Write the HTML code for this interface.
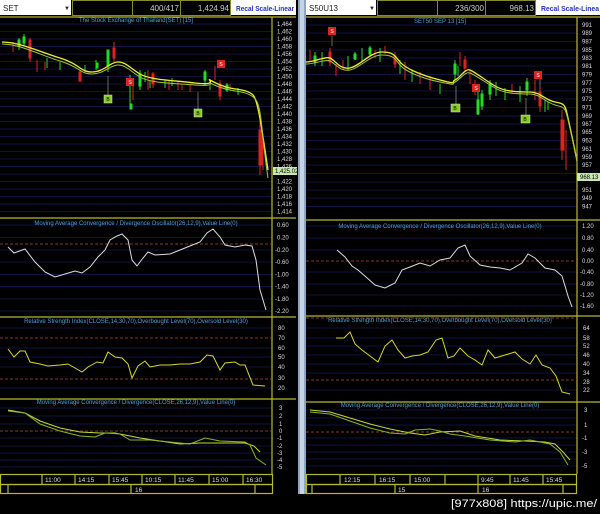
<!DOCTYPE html><html><head><meta charset="utf-8"><style>
body{margin:0;background:#000;width:600px;height:514px;overflow:hidden;font-family:"Liberation Sans",sans-serif}
svg{display:block}
text{font-family:"Liberation Sans",sans-serif}
</style></head><body>
<svg width="600" height="514" viewBox="0 0 600 514" xmlns="http://www.w3.org/2000/svg">
<rect width="600" height="514" fill="#000"/>
<rect x="0" y="0" width="71" height="15" fill="#fff"/>
<text x="3" y="11" font-size="8" fill="#222">SET</text><text x="64" y="10" font-size="6" fill="#222">▼</text>
<g fill="#000" stroke="#8a8a2a" stroke-width="1">
<rect x="72.5" y="0.5" width="60" height="15"/><rect x="132.5" y="0.5" width="48" height="15"/><rect x="180.5" y="0.5" width="50" height="15"/>
<rect x="377.5" y="0.5" width="60" height="15"/><rect x="437.5" y="0.5" width="48" height="15"/><rect x="485.5" y="0.5" width="50" height="15"/></g>
<text x="179" y="11" font-size="8" fill="#ccc" text-anchor="end">400/417</text>
<text x="229" y="11" font-size="8" fill="#ccc" text-anchor="end">1,424.94</text>
<rect x="231" y="0" width="65" height="15" fill="#fff"/>
<text x="236" y="11" font-size="7" font-weight="bold" fill="#2233bb" textLength="58" lengthAdjust="spacingAndGlyphs">Recal Scale-Linear</text>
<rect x="306" y="0" width="70" height="15" fill="#fff"/>
<text x="309" y="11" font-size="8" fill="#222">S50U13</text><text x="369" y="10" font-size="6" fill="#222">▼</text>
<text x="484" y="11" font-size="8" fill="#ccc" text-anchor="end">236/300</text>
<text x="534" y="11" font-size="8" fill="#ccc" text-anchor="end">968.13</text>
<rect x="536" y="0" width="64" height="15" fill="#fff"/>
<text x="541" y="11" font-size="7" font-weight="bold" fill="#2233bb" textLength="58" lengthAdjust="spacingAndGlyphs">Recal Scale-Linea</text>
<rect x="298" y="0" width="8" height="494" fill="#8fa6c0"/><rect x="300" y="0" width="4" height="494" fill="#c6d4e4"/>
<g stroke="#0d1240" stroke-width="1">
<path d="M0 24H272M0 31.5H272M0 39H272M0 46.5H272M0 54H272M0 61.5H272M0 69H272M0 76.5H272M0 84H272M0 91.5H272M0 99H272M0 106.5H272M0 114H272M0 121.5H272M0 129H272M0 136.5H272M0 144H272M0 151.5H272M0 159H272M0 166.5H272M0 174H272M0 181.5H272M0 189H272M0 196.5H272M0 204H272M0 211.5H272"/>
<path d="M0 225H272M0 237.5H272M0 250H272M0 262H272M0 274.5H272M0 286.5H272M0 299H272M0 311H272"/>
<path d="M0 328H272M0 348H272M0 357H272M0 367H272M0 388H272"/>
<path d="M0 408H272M0 416H272M0 424H272M0 438H272M0 446H272M0 453H272M0 460H272M0 467H272"/>
<path d="M306 25H577M306 33H577M306 41.5H577M306 50H577M306 58H577M306 66H577M306 74.5H577M306 83H577M306 91H577M306 99H577M306 107.5H577M306 116H577M306 124H577M306 132H577M306 140.5H577M306 149H577M306 157H577M306 165H577M306 173.5H577M306 182H577M306 190H577M306 198H577M306 206.5H577"/>
<path d="M306 226H577M306 238H577M306 250H577M306 272H577M306 284H577M306 295H577M306 306H577"/>
<path d="M306 328H577M306 338H577M306 346H577M306 355H577M306 364H577M306 373H577M306 390H577"/>
<path d="M306 410H577M306 418H577M306 425H577M306 438H577M306 445H577M306 452H577M306 459H577M306 466H577"/>
</g>
<g stroke="#b8b830" stroke-width="1.2" fill="none">
<path d="M0 17H296M0 218H296M0 317H296M0 399H296M272 17V474"/>
<path d="M306 17H600M306 220H600M306 316H600M306 402H600M577 17V474"/>
<rect x="0.5" y="474.5" width="272" height="10"/><rect x="0.5" y="484.5" width="272" height="9"/>
<rect x="306.5" y="474.5" width="270" height="10"/><rect x="306.5" y="484.5" width="270" height="9"/>
<path d="M42 474V484M75 474V484M109 474V484M142 474V484M175 474V484M209 474V484M243 474V484M8 484V494M131 484V494M255 484V494"/>
<path d="M340 474V484M375 474V484M410 474V484M445 474V484M478 474V484M510 474V484M543 474V484M312 484V494M395 484V494M478 484V494M563 484V494"/>
</g>
<g font-size="6" fill="#ddd">
<text x="277" y="26">1,464</text><text x="277" y="33.5">1,462</text><text x="277" y="41">1,460</text><text x="277" y="48.5">1,458</text><text x="277" y="56">1,456</text><text x="277" y="63.5">1,454</text><text x="277" y="71">1,452</text><text x="277" y="78.5">1,450</text><text x="277" y="86">1,448</text><text x="277" y="93.5">1,446</text><text x="277" y="101">1,444</text><text x="277" y="108.5">1,442</text><text x="277" y="116">1,440</text><text x="277" y="123.5">1,438</text><text x="277" y="131">1,436</text><text x="277" y="138.5">1,434</text><text x="277" y="146">1,432</text><text x="277" y="153.5">1,430</text><text x="277" y="161">1,428</text><text x="277" y="168.5">1,426</text><text x="277" y="183.5">1,422</text><text x="277" y="191">1,420</text><text x="277" y="198.5">1,418</text><text x="277" y="206">1,416</text><text x="277" y="213.5">1,414</text>
<text x="277" y="227">0.60</text><text x="277" y="239.5">0.20</text><text x="275" y="252">-0.20</text><text x="275" y="264">-0.60</text><text x="275" y="276.5">-1.00</text><text x="275" y="288.5">-1.40</text><text x="275" y="301">-1.80</text><text x="275" y="313">-2.20</text>
<text x="278" y="330">80</text><text x="278" y="340">70</text><text x="278" y="350">60</text><text x="278" y="359">50</text><text x="278" y="369">40</text><text x="278" y="380">30</text><text x="278" y="390">20</text>
<text x="279" y="410">3</text><text x="279" y="418">2</text><text x="279" y="426">1</text><text x="279" y="433">0</text><text x="277" y="440">-1</text><text x="277" y="448">-2</text><text x="277" y="455">-3</text><text x="277" y="462">-4</text><text x="277" y="469">-5</text>
<text x="582" y="27">991</text><text x="582" y="35">989</text><text x="582" y="43.5">987</text><text x="582" y="52">985</text><text x="582" y="60">983</text><text x="582" y="68">981</text><text x="582" y="76.5">979</text><text x="582" y="85">977</text><text x="582" y="93">975</text><text x="582" y="101">973</text><text x="582" y="109.5">971</text><text x="582" y="118">969</text><text x="582" y="126">967</text><text x="582" y="134">965</text><text x="582" y="142.5">963</text><text x="582" y="151">961</text><text x="582" y="159">959</text><text x="582" y="167">957</text><text x="582" y="192">951</text><text x="582" y="200">949</text><text x="582" y="208.5">947</text>
<text x="582" y="228">1.20</text><text x="582" y="240">0.80</text><text x="582" y="252">0.40</text><text x="582" y="263">0.00</text><text x="580" y="274">-0.40</text><text x="580" y="286">-0.80</text><text x="580" y="297">-1.20</text><text x="580" y="308">-1.60</text>
<text x="583" y="330">64</text><text x="583" y="340">58</text><text x="583" y="348">52</text><text x="583" y="357">46</text><text x="583" y="366">40</text><text x="583" y="375">34</text><text x="583" y="384">28</text><text x="583" y="392">22</text>
<text x="584" y="412">3</text><text x="584" y="427">1</text><text x="582" y="440">-1</text><text x="582" y="454">-3</text><text x="582" y="468">-5</text>
</g>
<g font-size="6.5" fill="#ddd">
<text x="45" y="482">11:00</text><text x="78" y="482">14:15</text><text x="112" y="482">15:45</text><text x="145" y="482">10:15</text><text x="178" y="482">11:45</text><text x="212" y="482">15:00</text><text x="246" y="482">16:30</text><text x="135" y="492">16</text>
<text x="344" y="482">12:15</text><text x="379" y="482">16:15</text><text x="414" y="482">15:00</text><text x="481" y="482">9:45</text><text x="513" y="482">11:45</text><text x="546" y="482">15:45</text><text x="398" y="492">15</text><text x="482" y="492">16</text>
</g>
<g font-size="6" fill="#4aa0d8" text-anchor="middle">
<text x="136" y="22">The Stock Exchange of Thailand(SET) [15]</text>
<text x="136" y="225">Moving Average Convergence / Divergence Oscillator(26,12,9),Value Line(0)</text>
<text x="136" y="323">Relative Strength Index(CLOSE,14,30,70),Overbought Level(70),Oversold Level(30)</text>
<text x="136" y="404">Moving Average Convergence / Divergence(CLOSE,26,12,9),Value Line(0)</text>
<text x="440" y="23">SET50 SEP 13    [15]</text>
<text x="440" y="228">Moving Average Convergence / Divergence Oscillator(26,12,9),Value Line(0)</text>
<text x="440" y="322">Relative Strength Index(CLOSE,14,30,70),Overbought Level(70),Oversold Level(30)</text>
<text x="440" y="407">Moving Average Convergence / Divergence(CLOSE,26,12,9),Value Line(0)</text>
</g>
<g stroke="#b04848" stroke-dasharray="3,2" stroke-width="0.8">
<path d="M0 244H272M0 338H272M0 379H272M0 431H272M306 261H577M306 318H577M306 380H577M306 432H577"/>
</g>
<g stroke-width="1">
<g stroke="#22dd22" fill="#22dd22">
<path d="M19 38V50M24 34V46M47 58V68M60 62V70M85 65V72M96 60V70M108 50V72M130 75V105M140 70V90M145 72V82M150 80V88M165 80V88M172 78V86M205 70V86M210 80V90M227 83V92M238 88V95"/>
<rect x="18" y="40" width="2" height="6"/><rect x="23" y="37" width="2" height="6"/><rect x="107" y="50" width="2" height="16"/><rect x="130" y="104" width="2" height="5"/><rect x="139" y="74" width="2" height="12"/><rect x="204" y="72" width="2" height="8"/><rect x="226" y="85" width="2" height="5"/><rect x="96" y="63" width="2" height="5"/>
</g>
<g stroke="#dd2222" fill="#dd2222">
<path d="M13 42V52M30 38V62M37 60V72M45 62V70M80 70V82M114 42V62M133 80V100M148 70V90M153 72V88M169 80V90M178 82V90M182 84V90M190 84V92M215 66V80M220 80V100M230 84V90M260 120V175M263 140V170"/>
<rect x="29" y="40" width="2" height="18"/><rect x="79" y="72" width="2" height="9"/><rect x="113" y="48" width="2" height="10"/><rect x="219" y="84" width="2" height="12"/><rect x="259" y="130" width="3" height="35"/><rect x="152" y="74" width="2" height="10"/>
</g>
</g>
<path d="M2 42C20 42 40 52 60 58S80 72 92 72S110 62 118 62S130 68 140 74S170 80 195 83S206 78 210 80S220 86 230 88S248 90 253 95S262 130 268 170" stroke="#eeee33" stroke-width="1.3" fill="none"/>
<path d="M2 44C20 44 40 55 60 61S80 74 92 74S110 65 118 65S130 71 140 77S170 83 195 85S206 81 210 83S220 88 230 90S250 92 256 100S262 140 268 178" stroke="#a8c838" stroke-width="1" fill="none"/>
<g font-size="5" text-anchor="middle">
<path d="M108 76V96M198 92V110" stroke="#aaa" stroke-width="0.6"/>
<rect x="104" y="95" width="8" height="8" fill="#88cc22" stroke="#ddd" stroke-width="0.5"/><text x="108" y="101" fill="#000">B</text>
<rect x="194" y="109" width="8" height="8" fill="#88cc22" stroke="#ddd" stroke-width="0.5"/><text x="198" y="115" fill="#000">B</text>
<rect x="126" y="78" width="8" height="8" fill="#dd2222"/><text x="130" y="84" fill="#fff">S</text>
<rect x="217" y="60" width="8" height="8" fill="#dd2222"/><text x="221" y="66" fill="#fff">S</text>
</g>
<rect x="273" y="167" width="24" height="8" fill="#c8e8b0"/><text x="275" y="173" font-size="6" fill="#000">1,425.02</text>
<g stroke-width="1">
<g stroke="#22dd22" fill="#22dd22">
<path d="M315 52V66M322 52V66M348 56V70M355 52V60M362 48V62M370 46V56M380 48V62M400 60V74M412 70V82M440 84V94M455 60V80M458 66V76M478 84V115M482 90V110M490 80V100M496 82V96M505 88V100M520 86V102M527 78V96M545 100V112M548 102V110"/>
<rect x="314" y="56" width="2" height="6"/><rect x="354" y="54" width="2" height="5"/><rect x="369" y="48" width="2" height="6"/><rect x="454" y="64" width="2" height="10"/><rect x="477" y="100" width="2" height="14"/><rect x="481" y="94" width="2" height="12"/><rect x="489" y="84" width="2" height="10"/><rect x="526" y="82" width="2" height="8"/>
</g>
<g stroke="#dd2222" fill="#dd2222">
<path d="M310 50V62M330 48V66M336 64V76M343 60V70M375 50V58M385 46V54M395 52V68M405 62V80M420 72V84M430 76V90M460 52V66M465 56V72M470 70V84M475 80V95M512 84V94M535 80V100M540 88V112M562 110V160M566 130V170"/>
<rect x="329" y="52" width="2" height="10"/><rect x="394" y="56" width="2" height="8"/><rect x="464" y="60" width="2" height="8"/><rect x="539" y="92" width="2" height="14"/><rect x="561" y="120" width="3" height="30"/>
</g>
</g>
<path d="M306 62C315 62 325 56 330 58S340 70 350 68S370 52 382 52S395 56 400 62S420 75 440 80S450 82 455 80S465 68 470 70S485 80 495 86S520 92 530 92S545 100 555 102S565 104 568 118S573 140 576 156" stroke="#eeee33" stroke-width="1.3" fill="none"/>
<path d="M306 64C315 64 325 59 330 61S340 72 350 70S370 55 382 55S395 59 400 65S420 78 440 82S450 84 455 82S465 71 470 73S485 82 495 88S520 94 530 94S545 102 555 105S565 106 569 124S574 146 577 162" stroke="#a8c838" stroke-width="1" fill="none"/>
<g font-size="5" text-anchor="middle">
<path d="M332 36V46M456 86V104M526 98V116M540 76V88" stroke="#aaa" stroke-width="0.6"/>
<rect x="328" y="27" width="8" height="8" fill="#dd2222"/><text x="332" y="33" fill="#fff">S</text>
<rect x="472" y="84" width="8" height="8" fill="#dd2222"/><text x="476" y="90" fill="#fff">S</text>
<rect x="534" y="71" width="8" height="8" fill="#dd2222"/><text x="538" y="77" fill="#fff">S</text>
<rect x="451" y="104" width="9" height="8" fill="#88cc22" stroke="#ddd" stroke-width="0.5"/><text x="455" y="110" fill="#000">B</text>
<rect x="521" y="115" width="9" height="8" fill="#88cc22" stroke="#ddd" stroke-width="0.5"/><text x="525" y="121" fill="#000">B</text>
</g>
<rect x="577" y="173" width="23" height="8" fill="#c8e8b0"/><text x="580" y="179" font-size="6" fill="#000">968.13</text>
<path d="M8 247L14 253L25 249L35 262L45 272L55 277L65 274L75 271L82 273L90 267L98 257L105 250L110 240L117 236L122 234L128 240L132 260L137 266L143 258L148 252L155 255L170 254L180 250L190 246L200 242L207 233L213 229L220 237L225 245L235 247L245 245L252 246L256 260L260 290L266 310" stroke="#ddd" stroke-width="1" fill="none"/>
<path d="M8 349L14 357L20 351L25 351L30 362L40 364L48 366L60 365L68 364L75 368L82 372L88 367L97 362L103 363L108 352L115 357L122 358L128 364L132 378L138 366L145 361L150 367L160 365L170 365L180 364L190 364L200 362L207 355L213 356L220 370L225 363L235 362L240 365L245 365L253 385L265 386" stroke="#d8d822" stroke-width="1" fill="none"/>
<path d="M8 410L25 413L40 421L60 428L80 432L100 433L115 433L125 435L140 438L160 441L180 444L200 443L230 443L245 443L254 446L260 452" stroke="#c8d838" stroke-width="1" fill="none"/>
<path d="M8 411L25 413L40 424L60 431L80 436L95 437L105 433L120 434L130 440L150 440L170 442L190 444L205 438L220 441L245 442L250 445L256 458L266 465" stroke="#88b820" stroke-width="1" fill="none"/>
<path d="M337 250L345 257L352 266L358 270L366 277L375 285L385 288L395 283L402 270L410 267L420 263L430 266L440 260L450 258L458 248L465 245L470 256L480 265L490 267L500 268L510 270L522 263L528 254L535 258L545 268L555 270L562 276L568 296L572 307" stroke="#ddd" stroke-width="1" fill="none"/>
<path d="M336 338L344 338L350 332L355 344L362 350L370 356L378 362L385 346L392 340L398 350L405 358L412 356L420 355L428 352L436 340L442 338L448 358L454 356L460 348L468 356L475 360L482 365L488 350L495 358L505 355L515 352L522 359L530 364L536 355L542 365L550 368L556 376L562 392L570 394" stroke="#d8d822" stroke-width="1" fill="none"/>
<path d="M310 410L330 412L350 418L370 424L390 429L410 433L425 435L440 432L460 431L475 436L500 440L525 441L545 442L555 444L563 452L570 460" stroke="#c8d838" stroke-width="1" fill="none"/>
<path d="M310 412L330 414L350 421L370 428L390 433L405 434L415 430L430 429L440 431L450 434L465 436L490 440L515 442L530 440L550 444L560 452L568 465" stroke="#88b820" stroke-width="1" fill="none"/>
<text x="451" y="507" font-size="11" fill="#fff" font-family="Liberation Mono, monospace" textLength="146" lengthAdjust="spacingAndGlyphs">[977x808] https://upic.me/</text>
</svg>
</body></html>
